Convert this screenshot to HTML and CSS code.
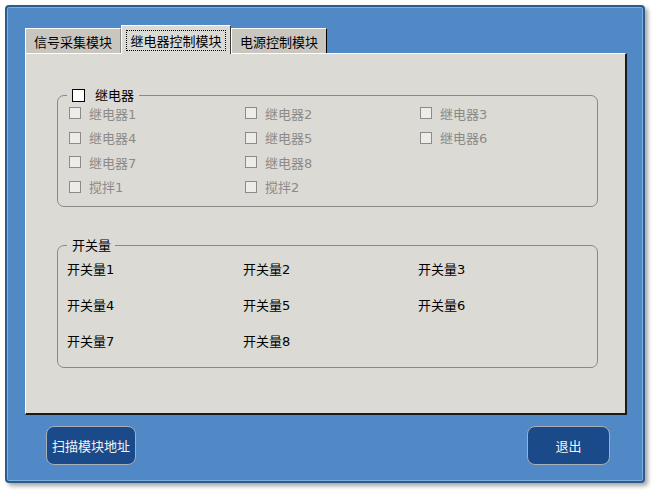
FILE: index.html
```html
<!DOCTYPE html>
<html lang="zh">
<head>
<meta charset="utf-8">
<title>继电器控制模块</title>
<link rel="stylesheet" href="styles.css">
</head>
<body>
<div class="window">
  <div class="tabs">
    <div class="tab">信号采集模块</div>
    <div class="tab active"><span class="focus">继电器控制模块</span></div>
    <div class="tab last">电源控制模块</div>
  </div>
  <div class="panel">
    <fieldset class="group relay">
      <legend class="legend"><span class="check main"></span>继电器</legend>
      <div class="grid relay-grid">
        <div class="item dis"><span class="check"></span>继电器1</div>
        <div class="item dis"><span class="check"></span>继电器2</div>
        <div class="item dis"><span class="check"></span>继电器3</div>
        <div class="item dis"><span class="check"></span>继电器4</div>
        <div class="item dis"><span class="check"></span>继电器5</div>
        <div class="item dis"><span class="check"></span>继电器6</div>
        <div class="item dis"><span class="check"></span>继电器7</div>
        <div class="item dis"><span class="check"></span>继电器8</div>
        <div class="item dis empty"></div>
        <div class="item dis"><span class="check"></span>搅拌1</div>
        <div class="item dis"><span class="check"></span>搅拌2</div>
      </div>
    </fieldset>
    <fieldset class="group switch">
      <legend class="legend plain">开关量</legend>
      <div class="grid switch-grid">
        <div class="item">开关量1</div>
        <div class="item">开关量2</div>
        <div class="item">开关量3</div>
        <div class="item">开关量4</div>
        <div class="item">开关量5</div>
        <div class="item">开关量6</div>
        <div class="item">开关量7</div>
        <div class="item">开关量8</div>
      </div>
    </fieldset>
  </div>
  <div class="buttons">
    <button class="btn scan">扫描模块地址</button>
    <button class="btn quit">退出</button>
  </div>
</div>
</body>
</html>
```
FILE: styles.css
```css
html, body {
  margin: 0;
  padding: 0;
  background: #ffffff;
  width: 654px;
  height: 494px;
  overflow: hidden;
}
body {
  font-family: "DejaVu Sans", "Noto Sans CJK SC", sans-serif;
  font-size: 13px;
}
.window {
  margin: 5px 0 0 5px;
  width: 640px;
  height: 478px;
  box-sizing: border-box;
  border: 2px solid #2c5b8d;
  border-radius: 4px;
  background: #5089c6;
  box-shadow: inset 0 0 0 1px #7eaee0, 3px 3px 4px rgba(0, 0, 0, 0.35);
  padding: 18px 0 0 18px;
  display: flex;
  flex-direction: column;
}
.tabs {
  display: flex;
  align-items: flex-end;
  height: 28px;
  position: relative;
  z-index: 1;
}
.tab {
  box-sizing: border-box;
  height: 25px;
  width: 96px;
  background: #c9c6c0;
  border-top: 1px solid #ffffff;
  border-left: 1px solid #ffffff;
  border-right: 1px solid #8a8884;
  display: flex;
  align-items: center;
  justify-content: center;
  color: #000;
  font-family: "Noto Sans CJK SC", sans-serif;
  font-size: 13px;
  padding-top: 1px;
}
.tab.active {
  height: 29px;
  margin-bottom: -1px;
  width: 110px;
  background: #dcdad5;
  border-right: 1px solid #3a3a3a;
}
.tab.last {
  border-right: 1px solid #000;
}
.focus {
  border: 1px dotted #000;
  padding: 0 3px;
  line-height: 19px;
}
.panel {
  box-sizing: border-box;
  width: 602px;
  height: 362px;
  background: #dcdad5;
  border-top: 1px solid #ffffff;
  border-left: 1px solid #ffffff;
  border-right: 2px solid #1a1a1a;
  border-bottom: 2px solid #1a1a1a;
  padding: 33px 0 0 31px;
  display: flex;
  flex-direction: column;
  gap: 30px;
}
.group {
  margin: 0;
  width: 541px;
  box-sizing: border-box;
  border: 1px solid #8a8986;
  border-radius: 7px;
  padding: 0;
  min-width: 0;
}
.legend {
  margin-left: 9px;
  padding: 0 5px;
  display: flex;
  align-items: center;
  font-family: "Noto Sans CJK SC", sans-serif;
  font-size: 13px;
  color: #000;
  line-height: 16px;
}
.legend.plain {
  padding: 0 4px 0 5px;
}
.check {
  display: inline-block;
  box-sizing: border-box;
  width: 12px;
  height: 12px;
  border: 1px solid #8d8b88;
  background: #eeece9;
  margin-right: 8px;
  flex: none;
}
.check.main {
  width: 13px;
  height: 13px;
  border-color: #000;
  background: #fff;
  margin-right: 10px;
}
.grid {
  display: grid;
  grid-template-columns: 176px 175px 175px;
}
.relay {
  height: 120px;
}
.relay-grid {
  margin-top: -2px;
  padding-left: 11px;
  grid-auto-rows: 24.5px;
}
.item {
  display: flex;
  align-items: center;
  font-family: "DejaVu Sans", "Noto Sans CJK SC", sans-serif;
  font-size: 13px;
  color: #000;
}
.item.dis {
  color: #8c8a87;
}
.switch {
  height: 131px;
}
.switch-grid {
  margin-top: -3px;
  padding-left: 9px;
  grid-auto-rows: 36px;
}
.buttons {
  display: flex;
  justify-content: space-between;
  width: 602px;
  margin-top: 11px;
  box-sizing: border-box;
  padding: 0 17px 0 21px;
}
.btn {
  height: 39px;
  box-sizing: border-box;
  background: #1b4a8a;
  border: 1px solid #a8aeb6;
  border-radius: 8px;
  color: #f2f2f2;
  font-family: "Noto Sans CJK SC", sans-serif;
  font-size: 13px;
  padding: 0;
}
.btn.scan {
  width: 90px;
}
.btn.quit {
  width: 83px;
}
```
